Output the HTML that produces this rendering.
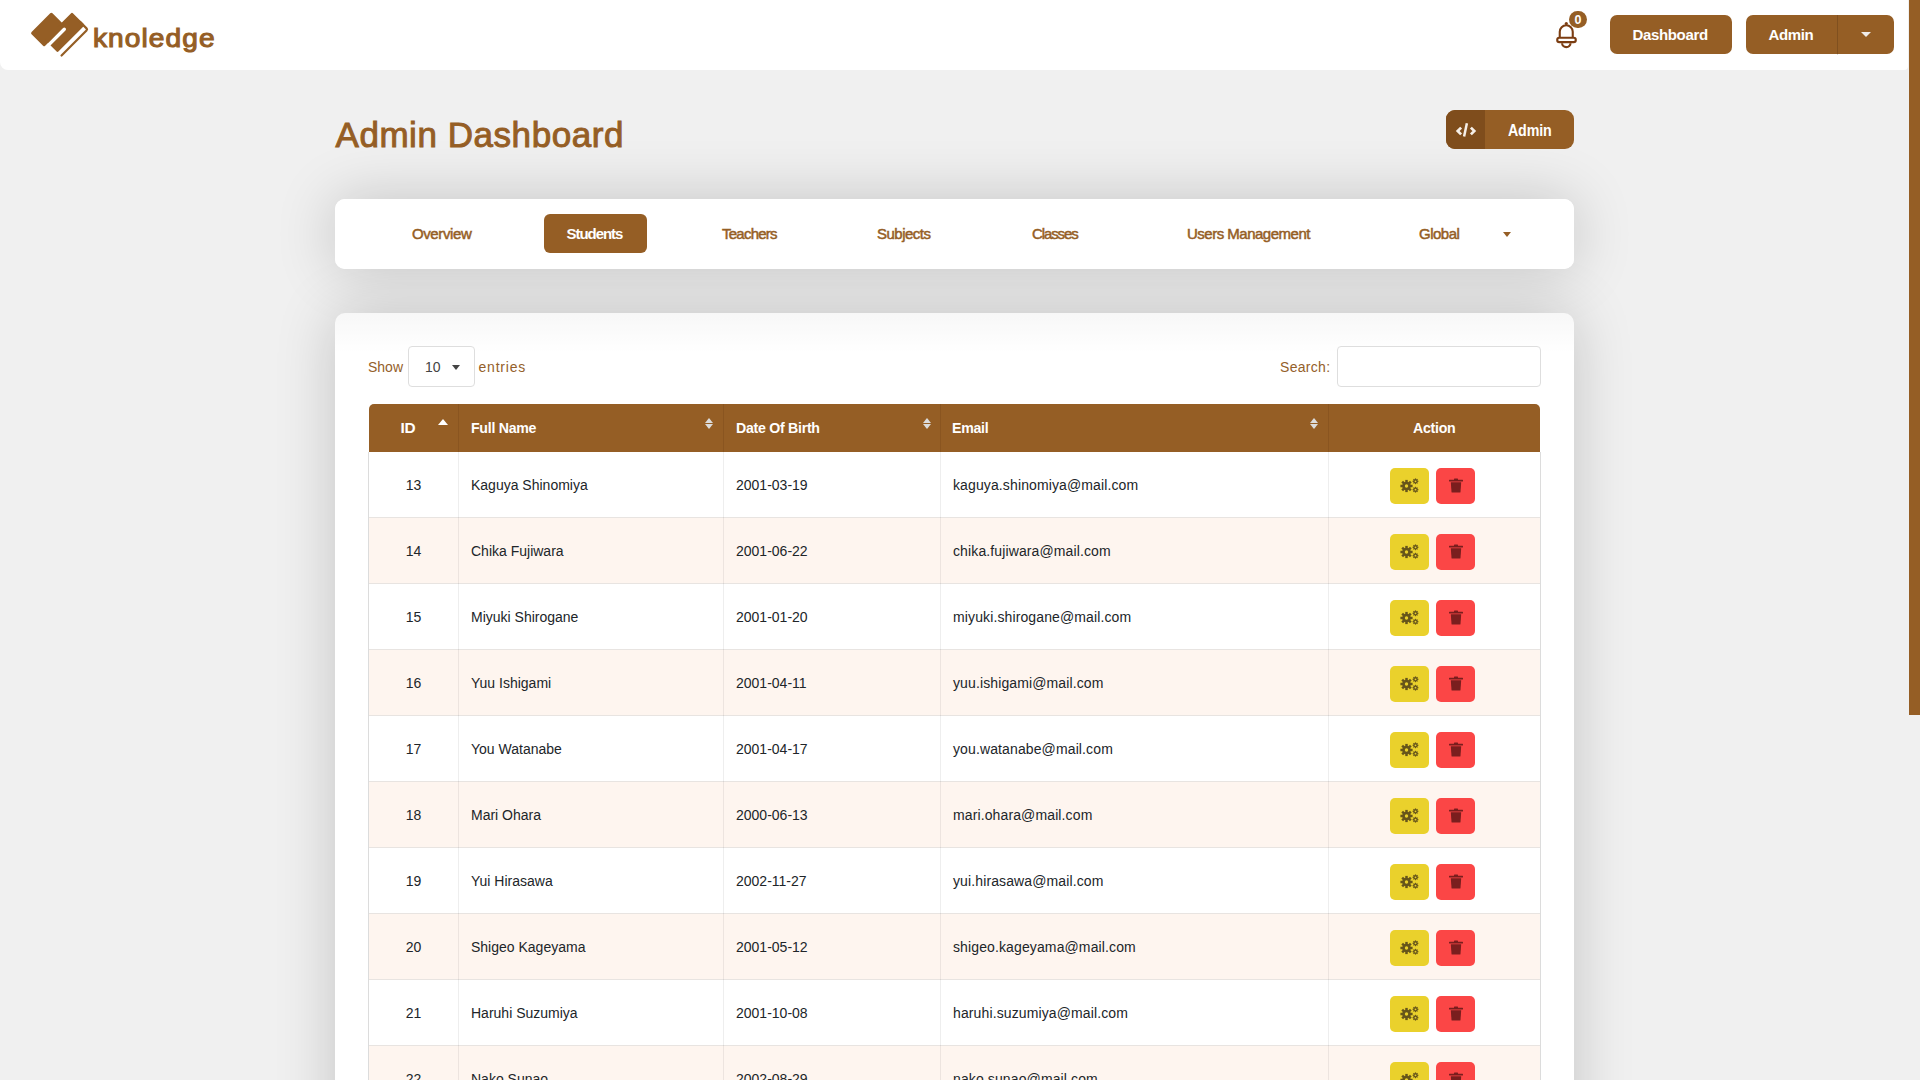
<!DOCTYPE html>
<html><head><meta charset="utf-8"><title>Admin Dashboard</title>
<style>
*{box-sizing:border-box;margin:0;padding:0}
html,body{width:1920px;height:1080px;overflow:hidden;background:#f0f0f0;font-family:"Liberation Sans",sans-serif}
.a{position:absolute}
.t{position:absolute;white-space:nowrap;line-height:1}
</style></head><body>
<div class="a" style="left:335px;top:199px;width:1239px;height:70px;background:#fff;border-radius:10px;box-shadow:0 0 60px rgba(0,0,0,.19)"></div>
<div class="a" style="left:335px;top:313px;width:1239px;height:900px;background:#fff;border-radius:10px;box-shadow:0 0 60px rgba(0,0,0,.19)"></div>
<div class="a" style="left:335px;top:199px;width:1239px;height:70px;background:#fff;border-radius:10px"></div>
<div class="a" style="left:335px;top:313px;width:1239px;height:40px;background:linear-gradient(rgba(0,0,0,.03),rgba(0,0,0,0));border-radius:10px 10px 0 0"></div>
<div class="a" style="left:0;top:0;width:1908px;height:70px;background:#fff;border-radius:0 0 4px 8px"></div>
<div class="a" style="left:1909px;top:0;width:11px;height:715px;background:#955e25"></div>
<svg class="a" style="left:0;top:0" width="100" height="70" viewBox="0 0 100 70">
<g transform="rotate(45)">
<rect x="44.9" y="-27.72" width="19.45" height="29.56" rx="1.6" fill="#955e25"/>
<rect x="59.61" y="-42.21" width="18.17" height="38.67" rx="1.6" fill="#955e25"/>
<rect x="64.49" y="-26.45" width="3.39" height="30" rx="1.7" fill="#fff"/>
<path d="M 72,-41.11 L 81.23,-41.11 A 1.5 1.5 0 0 1 82.73,-39.61 L 82.73,-4.3" fill="none" stroke="#955e25" stroke-width="2.2" stroke-linecap="round"/>
</g>
</svg>
<div class="t" style="left:93px;top:24.59px;font-size:26px;font-weight:400;color:#955e25;letter-spacing:1px;-webkit-text-stroke:1.1px #955e25;transform:scaleX(1.08);transform-origin:0 0">knoledge</div>
<svg class="a" style="left:1550px;top:15px" width="34" height="36" viewBox="0 0 34 36">
<g fill="none" stroke="#7b3d12" stroke-width="2.1">
<path d="M 9.75,22 L 9.75,16.8 A 6.5 6.5 0 0 1 22.75,16.8 L 22.75,22"/>
<rect x="7.2" y="22.8" width="18.6" height="4.3" rx="2.2"/>
<path d="M 12.1,28.3 A 4.2 3.8 0 0 0 20.5,28.3"/>
</g>
<circle cx="16.3" cy="8.5" r="1.6" fill="#7b3d12"/>
</svg>
<div class="a" style="left:1569px;top:11px;width:18px;height:17px;border-radius:9px;background:#955e25"></div>
<div class="t" style="left:1569.0px;width:18px;text-align:center;top:14.42px;font-size:12.5px;font-weight:700;color:#fff;">0</div>
<div class="a" style="left:1610px;top:15px;width:122px;height:39px;background:#955e25;border-radius:7px"></div>
<div class="t" style="left:1632.5px;top:27.30px;font-size:15px;font-weight:700;color:#fff;letter-spacing:-.35px">Dashboard</div>
<div class="a" style="left:1746px;top:15px;width:148px;height:39px;background:#955e25;border-radius:7px"></div>
<div class="a" style="left:1837px;top:15px;width:1px;height:40px;background:rgba(0,0,0,.14)"></div>
<div class="t" style="left:1768.5px;top:27.30px;font-size:15px;font-weight:700;color:#fff;letter-spacing:-.35px">Admin</div>
<div class="a" style="left:1861px;top:32px;width:0;height:0;border-left:5px solid transparent;border-right:5px solid transparent;border-top:5px solid #f0ece8"></div>
<div class="t" style="left:335.5px;top:117.17px;font-size:35px;font-weight:400;color:#955e25;letter-spacing:.55px;-webkit-text-stroke:.95px #955e25">Admin Dashboard</div>
<div class="a" style="left:1446px;top:110px;width:128px;height:39px;background:#955e25;border-radius:9px;overflow:hidden"><div class="a" style="left:0;top:0;width:39px;height:39px;background:#7f4d1c"></div></div>
<svg class="a" style="left:1455px;top:121px" width="22" height="18" viewBox="0 0 22 18">
<path d="M 6.1,6.6 L 2.7,10 L 6.1,13.4 M 15.9,6.6 L 19.3,10 L 15.9,13.4" fill="none" stroke="#f6efe8" stroke-width="2.7" stroke-linecap="butt" stroke-linejoin="miter"/>
<path d="M 11.9,2.2 L 9.1,15.6" stroke="#f6efe8" stroke-width="2.5"/>
</svg>
<div class="t" style="left:1508px;top:121.79px;font-size:16.2px;font-weight:700;color:#fff;letter-spacing:-.2px;transform:scaleX(.88);transform-origin:0 0">Admin</div>
<div class="a" style="left:544px;top:214px;width:103px;height:39px;background:#955e25;border-radius:6px"></div>
<div class="t" style="left:412px;top:226.30px;font-size:15px;font-weight:400;color:#955e25;letter-spacing:-0.4px;-webkit-text-stroke:.5px #955e25">Overview</div>
<div class="t" style="left:566.5px;top:226.30px;font-size:15px;font-weight:700;color:#fff;letter-spacing:-1.05px">Students</div>
<div class="t" style="left:722px;top:226.30px;font-size:15px;font-weight:400;color:#955e25;letter-spacing:-0.75px;-webkit-text-stroke:.5px #955e25">Teachers</div>
<div class="t" style="left:877px;top:226.30px;font-size:15px;font-weight:400;color:#955e25;letter-spacing:-0.5px;-webkit-text-stroke:.5px #955e25">Subjects</div>
<div class="t" style="left:1032px;top:226.30px;font-size:15px;font-weight:400;color:#955e25;letter-spacing:-1.1px;-webkit-text-stroke:.5px #955e25">Classes</div>
<div class="t" style="left:1187px;top:226.30px;font-size:15px;font-weight:400;color:#955e25;letter-spacing:-0.5px;-webkit-text-stroke:.5px #955e25">Users Management</div>
<div class="t" style="left:1419px;top:226.30px;font-size:15px;font-weight:400;color:#955e25;letter-spacing:-0.5px;-webkit-text-stroke:.5px #955e25">Global</div>
<div class="a" style="left:1503px;top:232px;width:0;height:0;border-left:4px solid transparent;border-right:4px solid transparent;border-top:5px solid #955e25"></div>
<div class="t" style="left:368px;top:360.15px;font-size:14px;font-weight:400;color:#94602a;">Show</div>
<div class="a" style="left:408px;top:346px;width:67px;height:41px;border:1px solid #dedede;border-radius:4px;background:#fff"></div>
<div class="t" style="left:425px;top:360.15px;font-size:14px;font-weight:400;color:#444;">10</div>
<div class="a" style="left:452px;top:365px;width:0;height:0;border-left:4px solid transparent;border-right:4px solid transparent;border-top:5px solid #444"></div>
<div class="t" style="left:478.5px;top:360.15px;font-size:14px;font-weight:400;color:#94602a;letter-spacing:.8px">entries</div>
<div class="t" style="left:1280px;top:360.15px;font-size:14px;font-weight:400;color:#94602a;letter-spacing:.3px">Search:</div>
<div class="a" style="left:1337px;top:346px;width:204px;height:41px;border:1px solid #dedede;border-radius:4px;background:#fff"></div>
<div class="a" style="left:369px;top:404px;width:1171px;height:48px;background:#955e25;border-radius:5px 5px 0 0"></div>
<div class="a" style="left:458px;top:404px;width:1px;height:48px;background:#8a5520"></div>
<div class="a" style="left:723px;top:404px;width:1px;height:48px;background:#8a5520"></div>
<div class="a" style="left:940px;top:404px;width:1px;height:48px;background:#8a5520"></div>
<div class="a" style="left:1328px;top:404px;width:1px;height:48px;background:#8a5520"></div>
<div class="t" style="left:400.5px;top:420.16px;font-size:15.4px;font-weight:700;color:#fff;letter-spacing:-.4px">ID</div>
<div class="t" style="left:470.5px;top:420.16px;font-size:15.4px;font-weight:700;color:#fff;letter-spacing:-.3px;transform:scaleX(.92);transform-origin:0 0">Full Name</div>
<div class="t" style="left:735.5px;top:420.16px;font-size:15.4px;font-weight:700;color:#fff;letter-spacing:-.3px;transform:scaleX(.92);transform-origin:0 0">Date Of Birth</div>
<div class="t" style="left:952px;top:420.16px;font-size:15.4px;font-weight:700;color:#fff;letter-spacing:-.3px;transform:scaleX(.92);transform-origin:0 0">Email</div>
<div class="t" style="left:1412.5px;top:420.16px;font-size:15.4px;font-weight:700;color:#fff;letter-spacing:-.3px;transform:scaleX(.92);transform-origin:0 0">Action</div>
<div class="a" style="left:438px;top:419px;width:0;height:0;border-left:5.5px solid transparent;border-right:5.5px solid transparent;border-bottom:6px solid #fff"></div>
<div class="a" style="left:705px;top:418px;width:0;height:0;border-left:4.5px solid transparent;border-right:4.5px solid transparent;border-bottom:5px solid #dcdcdc"></div>
<div class="a" style="left:705px;top:424px;width:0;height:0;border-left:4.5px solid transparent;border-right:4.5px solid transparent;border-top:5px solid #dcdcdc"></div>
<div class="a" style="left:922.5px;top:418px;width:0;height:0;border-left:4.5px solid transparent;border-right:4.5px solid transparent;border-bottom:5px solid #dcdcdc"></div>
<div class="a" style="left:922.5px;top:424px;width:0;height:0;border-left:4.5px solid transparent;border-right:4.5px solid transparent;border-top:5px solid #dcdcdc"></div>
<div class="a" style="left:1310px;top:418px;width:0;height:0;border-left:4.5px solid transparent;border-right:4.5px solid transparent;border-bottom:5px solid #dcdcdc"></div>
<div class="a" style="left:1310px;top:424px;width:0;height:0;border-left:4.5px solid transparent;border-right:4.5px solid transparent;border-top:5px solid #dcdcdc"></div>
<div class="a" style="left:369px;top:452px;width:1171px;height:66px;background:#fff"></div>
<div class="a" style="left:369px;top:517px;width:1171px;height:1px;background:#e8e4e1"></div>
<div class="t" style="left:373.5px;width:80px;text-align:center;top:477.95px;font-size:14px;font-weight:400;color:#212529;">13</div>
<div class="t" style="left:471px;top:477.95px;font-size:14px;font-weight:400;color:#212529;">Kaguya Shinomiya</div>
<div class="t" style="left:736px;top:477.95px;font-size:14px;font-weight:400;color:#212529;">2001-03-19</div>
<div class="t" style="left:953px;top:477.95px;font-size:14px;font-weight:400;color:#212529;letter-spacing:.12px">kaguya.shinomiya@mail.com</div>
<div class="a" style="left:1390px;top:468px;width:39px;height:36px;background:#ead12c;border-radius:5px"></div>
<div class="a" style="left:1436px;top:468px;width:39px;height:36px;background:#fb4646;border-radius:5px"></div>
<svg class="a" style="left:1399px;top:477px" width="22" height="18" viewBox="0 0 22 18">
<g fill="#66551b" stroke="#66551b">
<circle cx="7.5" cy="9" r="4.3" stroke="none"/>
<g stroke-width="2.5"><line x1="7.5" y1="2.9" x2="7.5" y2="15.1"/><line x1="1.4" y1="9" x2="13.6" y2="9"/><line x1="3.2" y1="4.7" x2="11.8" y2="13.3"/><line x1="3.2" y1="13.3" x2="11.8" y2="4.7"/></g>
<circle cx="16.5" cy="4.3" r="2.1" stroke="none"/><circle cx="16.5" cy="12.7" r="2.1" stroke="none"/>
<g stroke-width="1.2"><line x1="16.5" y1="1.4" x2="16.5" y2="7.2"/><line x1="13.6" y1="4.3" x2="19.4" y2="4.3"/><line x1="14.45" y1="2.25" x2="18.55" y2="6.35"/><line x1="14.45" y1="6.35" x2="18.55" y2="2.25"/>
<line x1="16.5" y1="9.8" x2="16.5" y2="15.6"/><line x1="13.6" y1="12.7" x2="19.4" y2="12.7"/><line x1="14.45" y1="10.65" x2="18.55" y2="14.75"/><line x1="14.45" y1="14.75" x2="18.55" y2="10.65"/></g>
</g><circle cx="7.5" cy="9" r="1.7" fill="#ead12c"/><circle cx="16.5" cy="4.3" r="0.9" fill="#ead12c"/><circle cx="16.5" cy="12.7" r="0.9" fill="#ead12c"/>
</svg>
<svg class="a" style="left:1448px;top:477.5px" width="16" height="16" viewBox="0 0 16 16">
<g fill="#7a1e1e"><rect x="1" y="1.8" width="14" height="1.6" rx=".5"/><rect x="6" y="0.6" width="4" height="1.6" rx=".5"/><path d="M 2.8,4.3 L 13.2,4.3 L 12.5,14 Q 12.4,14.6 11.8,14.6 L 4.2,14.6 Q 3.6,14.6 3.5,14 Z"/></g>
</svg>
<div class="a" style="left:369px;top:518px;width:1171px;height:66px;background:#fef5ef"></div>
<div class="a" style="left:369px;top:583px;width:1171px;height:1px;background:#e8e4e1"></div>
<div class="t" style="left:373.5px;width:80px;text-align:center;top:543.95px;font-size:14px;font-weight:400;color:#212529;">14</div>
<div class="t" style="left:471px;top:543.95px;font-size:14px;font-weight:400;color:#212529;">Chika Fujiwara</div>
<div class="t" style="left:736px;top:543.95px;font-size:14px;font-weight:400;color:#212529;">2001-06-22</div>
<div class="t" style="left:953px;top:543.95px;font-size:14px;font-weight:400;color:#212529;letter-spacing:.12px">chika.fujiwara@mail.com</div>
<div class="a" style="left:1390px;top:534px;width:39px;height:36px;background:#ead12c;border-radius:5px"></div>
<div class="a" style="left:1436px;top:534px;width:39px;height:36px;background:#fb4646;border-radius:5px"></div>
<svg class="a" style="left:1399px;top:543px" width="22" height="18" viewBox="0 0 22 18">
<g fill="#66551b" stroke="#66551b">
<circle cx="7.5" cy="9" r="4.3" stroke="none"/>
<g stroke-width="2.5"><line x1="7.5" y1="2.9" x2="7.5" y2="15.1"/><line x1="1.4" y1="9" x2="13.6" y2="9"/><line x1="3.2" y1="4.7" x2="11.8" y2="13.3"/><line x1="3.2" y1="13.3" x2="11.8" y2="4.7"/></g>
<circle cx="16.5" cy="4.3" r="2.1" stroke="none"/><circle cx="16.5" cy="12.7" r="2.1" stroke="none"/>
<g stroke-width="1.2"><line x1="16.5" y1="1.4" x2="16.5" y2="7.2"/><line x1="13.6" y1="4.3" x2="19.4" y2="4.3"/><line x1="14.45" y1="2.25" x2="18.55" y2="6.35"/><line x1="14.45" y1="6.35" x2="18.55" y2="2.25"/>
<line x1="16.5" y1="9.8" x2="16.5" y2="15.6"/><line x1="13.6" y1="12.7" x2="19.4" y2="12.7"/><line x1="14.45" y1="10.65" x2="18.55" y2="14.75"/><line x1="14.45" y1="14.75" x2="18.55" y2="10.65"/></g>
</g><circle cx="7.5" cy="9" r="1.7" fill="#ead12c"/><circle cx="16.5" cy="4.3" r="0.9" fill="#ead12c"/><circle cx="16.5" cy="12.7" r="0.9" fill="#ead12c"/>
</svg>
<svg class="a" style="left:1448px;top:543.5px" width="16" height="16" viewBox="0 0 16 16">
<g fill="#7a1e1e"><rect x="1" y="1.8" width="14" height="1.6" rx=".5"/><rect x="6" y="0.6" width="4" height="1.6" rx=".5"/><path d="M 2.8,4.3 L 13.2,4.3 L 12.5,14 Q 12.4,14.6 11.8,14.6 L 4.2,14.6 Q 3.6,14.6 3.5,14 Z"/></g>
</svg>
<div class="a" style="left:369px;top:584px;width:1171px;height:66px;background:#fff"></div>
<div class="a" style="left:369px;top:649px;width:1171px;height:1px;background:#e8e4e1"></div>
<div class="t" style="left:373.5px;width:80px;text-align:center;top:609.95px;font-size:14px;font-weight:400;color:#212529;">15</div>
<div class="t" style="left:471px;top:609.95px;font-size:14px;font-weight:400;color:#212529;">Miyuki Shirogane</div>
<div class="t" style="left:736px;top:609.95px;font-size:14px;font-weight:400;color:#212529;">2001-01-20</div>
<div class="t" style="left:953px;top:609.95px;font-size:14px;font-weight:400;color:#212529;letter-spacing:.12px">miyuki.shirogane@mail.com</div>
<div class="a" style="left:1390px;top:600px;width:39px;height:36px;background:#ead12c;border-radius:5px"></div>
<div class="a" style="left:1436px;top:600px;width:39px;height:36px;background:#fb4646;border-radius:5px"></div>
<svg class="a" style="left:1399px;top:609px" width="22" height="18" viewBox="0 0 22 18">
<g fill="#66551b" stroke="#66551b">
<circle cx="7.5" cy="9" r="4.3" stroke="none"/>
<g stroke-width="2.5"><line x1="7.5" y1="2.9" x2="7.5" y2="15.1"/><line x1="1.4" y1="9" x2="13.6" y2="9"/><line x1="3.2" y1="4.7" x2="11.8" y2="13.3"/><line x1="3.2" y1="13.3" x2="11.8" y2="4.7"/></g>
<circle cx="16.5" cy="4.3" r="2.1" stroke="none"/><circle cx="16.5" cy="12.7" r="2.1" stroke="none"/>
<g stroke-width="1.2"><line x1="16.5" y1="1.4" x2="16.5" y2="7.2"/><line x1="13.6" y1="4.3" x2="19.4" y2="4.3"/><line x1="14.45" y1="2.25" x2="18.55" y2="6.35"/><line x1="14.45" y1="6.35" x2="18.55" y2="2.25"/>
<line x1="16.5" y1="9.8" x2="16.5" y2="15.6"/><line x1="13.6" y1="12.7" x2="19.4" y2="12.7"/><line x1="14.45" y1="10.65" x2="18.55" y2="14.75"/><line x1="14.45" y1="14.75" x2="18.55" y2="10.65"/></g>
</g><circle cx="7.5" cy="9" r="1.7" fill="#ead12c"/><circle cx="16.5" cy="4.3" r="0.9" fill="#ead12c"/><circle cx="16.5" cy="12.7" r="0.9" fill="#ead12c"/>
</svg>
<svg class="a" style="left:1448px;top:609.5px" width="16" height="16" viewBox="0 0 16 16">
<g fill="#7a1e1e"><rect x="1" y="1.8" width="14" height="1.6" rx=".5"/><rect x="6" y="0.6" width="4" height="1.6" rx=".5"/><path d="M 2.8,4.3 L 13.2,4.3 L 12.5,14 Q 12.4,14.6 11.8,14.6 L 4.2,14.6 Q 3.6,14.6 3.5,14 Z"/></g>
</svg>
<div class="a" style="left:369px;top:650px;width:1171px;height:66px;background:#fef5ef"></div>
<div class="a" style="left:369px;top:715px;width:1171px;height:1px;background:#e8e4e1"></div>
<div class="t" style="left:373.5px;width:80px;text-align:center;top:675.95px;font-size:14px;font-weight:400;color:#212529;">16</div>
<div class="t" style="left:471px;top:675.95px;font-size:14px;font-weight:400;color:#212529;">Yuu Ishigami</div>
<div class="t" style="left:736px;top:675.95px;font-size:14px;font-weight:400;color:#212529;">2001-04-11</div>
<div class="t" style="left:953px;top:675.95px;font-size:14px;font-weight:400;color:#212529;letter-spacing:.12px">yuu.ishigami@mail.com</div>
<div class="a" style="left:1390px;top:666px;width:39px;height:36px;background:#ead12c;border-radius:5px"></div>
<div class="a" style="left:1436px;top:666px;width:39px;height:36px;background:#fb4646;border-radius:5px"></div>
<svg class="a" style="left:1399px;top:675px" width="22" height="18" viewBox="0 0 22 18">
<g fill="#66551b" stroke="#66551b">
<circle cx="7.5" cy="9" r="4.3" stroke="none"/>
<g stroke-width="2.5"><line x1="7.5" y1="2.9" x2="7.5" y2="15.1"/><line x1="1.4" y1="9" x2="13.6" y2="9"/><line x1="3.2" y1="4.7" x2="11.8" y2="13.3"/><line x1="3.2" y1="13.3" x2="11.8" y2="4.7"/></g>
<circle cx="16.5" cy="4.3" r="2.1" stroke="none"/><circle cx="16.5" cy="12.7" r="2.1" stroke="none"/>
<g stroke-width="1.2"><line x1="16.5" y1="1.4" x2="16.5" y2="7.2"/><line x1="13.6" y1="4.3" x2="19.4" y2="4.3"/><line x1="14.45" y1="2.25" x2="18.55" y2="6.35"/><line x1="14.45" y1="6.35" x2="18.55" y2="2.25"/>
<line x1="16.5" y1="9.8" x2="16.5" y2="15.6"/><line x1="13.6" y1="12.7" x2="19.4" y2="12.7"/><line x1="14.45" y1="10.65" x2="18.55" y2="14.75"/><line x1="14.45" y1="14.75" x2="18.55" y2="10.65"/></g>
</g><circle cx="7.5" cy="9" r="1.7" fill="#ead12c"/><circle cx="16.5" cy="4.3" r="0.9" fill="#ead12c"/><circle cx="16.5" cy="12.7" r="0.9" fill="#ead12c"/>
</svg>
<svg class="a" style="left:1448px;top:675.5px" width="16" height="16" viewBox="0 0 16 16">
<g fill="#7a1e1e"><rect x="1" y="1.8" width="14" height="1.6" rx=".5"/><rect x="6" y="0.6" width="4" height="1.6" rx=".5"/><path d="M 2.8,4.3 L 13.2,4.3 L 12.5,14 Q 12.4,14.6 11.8,14.6 L 4.2,14.6 Q 3.6,14.6 3.5,14 Z"/></g>
</svg>
<div class="a" style="left:369px;top:716px;width:1171px;height:66px;background:#fff"></div>
<div class="a" style="left:369px;top:781px;width:1171px;height:1px;background:#e8e4e1"></div>
<div class="t" style="left:373.5px;width:80px;text-align:center;top:741.95px;font-size:14px;font-weight:400;color:#212529;">17</div>
<div class="t" style="left:471px;top:741.95px;font-size:14px;font-weight:400;color:#212529;">You Watanabe</div>
<div class="t" style="left:736px;top:741.95px;font-size:14px;font-weight:400;color:#212529;">2001-04-17</div>
<div class="t" style="left:953px;top:741.95px;font-size:14px;font-weight:400;color:#212529;letter-spacing:.12px">you.watanabe@mail.com</div>
<div class="a" style="left:1390px;top:732px;width:39px;height:36px;background:#ead12c;border-radius:5px"></div>
<div class="a" style="left:1436px;top:732px;width:39px;height:36px;background:#fb4646;border-radius:5px"></div>
<svg class="a" style="left:1399px;top:741px" width="22" height="18" viewBox="0 0 22 18">
<g fill="#66551b" stroke="#66551b">
<circle cx="7.5" cy="9" r="4.3" stroke="none"/>
<g stroke-width="2.5"><line x1="7.5" y1="2.9" x2="7.5" y2="15.1"/><line x1="1.4" y1="9" x2="13.6" y2="9"/><line x1="3.2" y1="4.7" x2="11.8" y2="13.3"/><line x1="3.2" y1="13.3" x2="11.8" y2="4.7"/></g>
<circle cx="16.5" cy="4.3" r="2.1" stroke="none"/><circle cx="16.5" cy="12.7" r="2.1" stroke="none"/>
<g stroke-width="1.2"><line x1="16.5" y1="1.4" x2="16.5" y2="7.2"/><line x1="13.6" y1="4.3" x2="19.4" y2="4.3"/><line x1="14.45" y1="2.25" x2="18.55" y2="6.35"/><line x1="14.45" y1="6.35" x2="18.55" y2="2.25"/>
<line x1="16.5" y1="9.8" x2="16.5" y2="15.6"/><line x1="13.6" y1="12.7" x2="19.4" y2="12.7"/><line x1="14.45" y1="10.65" x2="18.55" y2="14.75"/><line x1="14.45" y1="14.75" x2="18.55" y2="10.65"/></g>
</g><circle cx="7.5" cy="9" r="1.7" fill="#ead12c"/><circle cx="16.5" cy="4.3" r="0.9" fill="#ead12c"/><circle cx="16.5" cy="12.7" r="0.9" fill="#ead12c"/>
</svg>
<svg class="a" style="left:1448px;top:741.5px" width="16" height="16" viewBox="0 0 16 16">
<g fill="#7a1e1e"><rect x="1" y="1.8" width="14" height="1.6" rx=".5"/><rect x="6" y="0.6" width="4" height="1.6" rx=".5"/><path d="M 2.8,4.3 L 13.2,4.3 L 12.5,14 Q 12.4,14.6 11.8,14.6 L 4.2,14.6 Q 3.6,14.6 3.5,14 Z"/></g>
</svg>
<div class="a" style="left:369px;top:782px;width:1171px;height:66px;background:#fef5ef"></div>
<div class="a" style="left:369px;top:847px;width:1171px;height:1px;background:#e8e4e1"></div>
<div class="t" style="left:373.5px;width:80px;text-align:center;top:807.95px;font-size:14px;font-weight:400;color:#212529;">18</div>
<div class="t" style="left:471px;top:807.95px;font-size:14px;font-weight:400;color:#212529;">Mari Ohara</div>
<div class="t" style="left:736px;top:807.95px;font-size:14px;font-weight:400;color:#212529;">2000-06-13</div>
<div class="t" style="left:953px;top:807.95px;font-size:14px;font-weight:400;color:#212529;letter-spacing:.12px">mari.ohara@mail.com</div>
<div class="a" style="left:1390px;top:798px;width:39px;height:36px;background:#ead12c;border-radius:5px"></div>
<div class="a" style="left:1436px;top:798px;width:39px;height:36px;background:#fb4646;border-radius:5px"></div>
<svg class="a" style="left:1399px;top:807px" width="22" height="18" viewBox="0 0 22 18">
<g fill="#66551b" stroke="#66551b">
<circle cx="7.5" cy="9" r="4.3" stroke="none"/>
<g stroke-width="2.5"><line x1="7.5" y1="2.9" x2="7.5" y2="15.1"/><line x1="1.4" y1="9" x2="13.6" y2="9"/><line x1="3.2" y1="4.7" x2="11.8" y2="13.3"/><line x1="3.2" y1="13.3" x2="11.8" y2="4.7"/></g>
<circle cx="16.5" cy="4.3" r="2.1" stroke="none"/><circle cx="16.5" cy="12.7" r="2.1" stroke="none"/>
<g stroke-width="1.2"><line x1="16.5" y1="1.4" x2="16.5" y2="7.2"/><line x1="13.6" y1="4.3" x2="19.4" y2="4.3"/><line x1="14.45" y1="2.25" x2="18.55" y2="6.35"/><line x1="14.45" y1="6.35" x2="18.55" y2="2.25"/>
<line x1="16.5" y1="9.8" x2="16.5" y2="15.6"/><line x1="13.6" y1="12.7" x2="19.4" y2="12.7"/><line x1="14.45" y1="10.65" x2="18.55" y2="14.75"/><line x1="14.45" y1="14.75" x2="18.55" y2="10.65"/></g>
</g><circle cx="7.5" cy="9" r="1.7" fill="#ead12c"/><circle cx="16.5" cy="4.3" r="0.9" fill="#ead12c"/><circle cx="16.5" cy="12.7" r="0.9" fill="#ead12c"/>
</svg>
<svg class="a" style="left:1448px;top:807.5px" width="16" height="16" viewBox="0 0 16 16">
<g fill="#7a1e1e"><rect x="1" y="1.8" width="14" height="1.6" rx=".5"/><rect x="6" y="0.6" width="4" height="1.6" rx=".5"/><path d="M 2.8,4.3 L 13.2,4.3 L 12.5,14 Q 12.4,14.6 11.8,14.6 L 4.2,14.6 Q 3.6,14.6 3.5,14 Z"/></g>
</svg>
<div class="a" style="left:369px;top:848px;width:1171px;height:66px;background:#fff"></div>
<div class="a" style="left:369px;top:913px;width:1171px;height:1px;background:#e8e4e1"></div>
<div class="t" style="left:373.5px;width:80px;text-align:center;top:873.95px;font-size:14px;font-weight:400;color:#212529;">19</div>
<div class="t" style="left:471px;top:873.95px;font-size:14px;font-weight:400;color:#212529;">Yui Hirasawa</div>
<div class="t" style="left:736px;top:873.95px;font-size:14px;font-weight:400;color:#212529;">2002-11-27</div>
<div class="t" style="left:953px;top:873.95px;font-size:14px;font-weight:400;color:#212529;letter-spacing:.12px">yui.hirasawa@mail.com</div>
<div class="a" style="left:1390px;top:864px;width:39px;height:36px;background:#ead12c;border-radius:5px"></div>
<div class="a" style="left:1436px;top:864px;width:39px;height:36px;background:#fb4646;border-radius:5px"></div>
<svg class="a" style="left:1399px;top:873px" width="22" height="18" viewBox="0 0 22 18">
<g fill="#66551b" stroke="#66551b">
<circle cx="7.5" cy="9" r="4.3" stroke="none"/>
<g stroke-width="2.5"><line x1="7.5" y1="2.9" x2="7.5" y2="15.1"/><line x1="1.4" y1="9" x2="13.6" y2="9"/><line x1="3.2" y1="4.7" x2="11.8" y2="13.3"/><line x1="3.2" y1="13.3" x2="11.8" y2="4.7"/></g>
<circle cx="16.5" cy="4.3" r="2.1" stroke="none"/><circle cx="16.5" cy="12.7" r="2.1" stroke="none"/>
<g stroke-width="1.2"><line x1="16.5" y1="1.4" x2="16.5" y2="7.2"/><line x1="13.6" y1="4.3" x2="19.4" y2="4.3"/><line x1="14.45" y1="2.25" x2="18.55" y2="6.35"/><line x1="14.45" y1="6.35" x2="18.55" y2="2.25"/>
<line x1="16.5" y1="9.8" x2="16.5" y2="15.6"/><line x1="13.6" y1="12.7" x2="19.4" y2="12.7"/><line x1="14.45" y1="10.65" x2="18.55" y2="14.75"/><line x1="14.45" y1="14.75" x2="18.55" y2="10.65"/></g>
</g><circle cx="7.5" cy="9" r="1.7" fill="#ead12c"/><circle cx="16.5" cy="4.3" r="0.9" fill="#ead12c"/><circle cx="16.5" cy="12.7" r="0.9" fill="#ead12c"/>
</svg>
<svg class="a" style="left:1448px;top:873.5px" width="16" height="16" viewBox="0 0 16 16">
<g fill="#7a1e1e"><rect x="1" y="1.8" width="14" height="1.6" rx=".5"/><rect x="6" y="0.6" width="4" height="1.6" rx=".5"/><path d="M 2.8,4.3 L 13.2,4.3 L 12.5,14 Q 12.4,14.6 11.8,14.6 L 4.2,14.6 Q 3.6,14.6 3.5,14 Z"/></g>
</svg>
<div class="a" style="left:369px;top:914px;width:1171px;height:66px;background:#fef5ef"></div>
<div class="a" style="left:369px;top:979px;width:1171px;height:1px;background:#e8e4e1"></div>
<div class="t" style="left:373.5px;width:80px;text-align:center;top:939.95px;font-size:14px;font-weight:400;color:#212529;">20</div>
<div class="t" style="left:471px;top:939.95px;font-size:14px;font-weight:400;color:#212529;">Shigeo Kageyama</div>
<div class="t" style="left:736px;top:939.95px;font-size:14px;font-weight:400;color:#212529;">2001-05-12</div>
<div class="t" style="left:953px;top:939.95px;font-size:14px;font-weight:400;color:#212529;letter-spacing:.12px">shigeo.kageyama@mail.com</div>
<div class="a" style="left:1390px;top:930px;width:39px;height:36px;background:#ead12c;border-radius:5px"></div>
<div class="a" style="left:1436px;top:930px;width:39px;height:36px;background:#fb4646;border-radius:5px"></div>
<svg class="a" style="left:1399px;top:939px" width="22" height="18" viewBox="0 0 22 18">
<g fill="#66551b" stroke="#66551b">
<circle cx="7.5" cy="9" r="4.3" stroke="none"/>
<g stroke-width="2.5"><line x1="7.5" y1="2.9" x2="7.5" y2="15.1"/><line x1="1.4" y1="9" x2="13.6" y2="9"/><line x1="3.2" y1="4.7" x2="11.8" y2="13.3"/><line x1="3.2" y1="13.3" x2="11.8" y2="4.7"/></g>
<circle cx="16.5" cy="4.3" r="2.1" stroke="none"/><circle cx="16.5" cy="12.7" r="2.1" stroke="none"/>
<g stroke-width="1.2"><line x1="16.5" y1="1.4" x2="16.5" y2="7.2"/><line x1="13.6" y1="4.3" x2="19.4" y2="4.3"/><line x1="14.45" y1="2.25" x2="18.55" y2="6.35"/><line x1="14.45" y1="6.35" x2="18.55" y2="2.25"/>
<line x1="16.5" y1="9.8" x2="16.5" y2="15.6"/><line x1="13.6" y1="12.7" x2="19.4" y2="12.7"/><line x1="14.45" y1="10.65" x2="18.55" y2="14.75"/><line x1="14.45" y1="14.75" x2="18.55" y2="10.65"/></g>
</g><circle cx="7.5" cy="9" r="1.7" fill="#ead12c"/><circle cx="16.5" cy="4.3" r="0.9" fill="#ead12c"/><circle cx="16.5" cy="12.7" r="0.9" fill="#ead12c"/>
</svg>
<svg class="a" style="left:1448px;top:939.5px" width="16" height="16" viewBox="0 0 16 16">
<g fill="#7a1e1e"><rect x="1" y="1.8" width="14" height="1.6" rx=".5"/><rect x="6" y="0.6" width="4" height="1.6" rx=".5"/><path d="M 2.8,4.3 L 13.2,4.3 L 12.5,14 Q 12.4,14.6 11.8,14.6 L 4.2,14.6 Q 3.6,14.6 3.5,14 Z"/></g>
</svg>
<div class="a" style="left:369px;top:980px;width:1171px;height:66px;background:#fff"></div>
<div class="a" style="left:369px;top:1045px;width:1171px;height:1px;background:#e8e4e1"></div>
<div class="t" style="left:373.5px;width:80px;text-align:center;top:1005.95px;font-size:14px;font-weight:400;color:#212529;">21</div>
<div class="t" style="left:471px;top:1005.95px;font-size:14px;font-weight:400;color:#212529;">Haruhi Suzumiya</div>
<div class="t" style="left:736px;top:1005.95px;font-size:14px;font-weight:400;color:#212529;">2001-10-08</div>
<div class="t" style="left:953px;top:1005.95px;font-size:14px;font-weight:400;color:#212529;letter-spacing:.12px">haruhi.suzumiya@mail.com</div>
<div class="a" style="left:1390px;top:996px;width:39px;height:36px;background:#ead12c;border-radius:5px"></div>
<div class="a" style="left:1436px;top:996px;width:39px;height:36px;background:#fb4646;border-radius:5px"></div>
<svg class="a" style="left:1399px;top:1005px" width="22" height="18" viewBox="0 0 22 18">
<g fill="#66551b" stroke="#66551b">
<circle cx="7.5" cy="9" r="4.3" stroke="none"/>
<g stroke-width="2.5"><line x1="7.5" y1="2.9" x2="7.5" y2="15.1"/><line x1="1.4" y1="9" x2="13.6" y2="9"/><line x1="3.2" y1="4.7" x2="11.8" y2="13.3"/><line x1="3.2" y1="13.3" x2="11.8" y2="4.7"/></g>
<circle cx="16.5" cy="4.3" r="2.1" stroke="none"/><circle cx="16.5" cy="12.7" r="2.1" stroke="none"/>
<g stroke-width="1.2"><line x1="16.5" y1="1.4" x2="16.5" y2="7.2"/><line x1="13.6" y1="4.3" x2="19.4" y2="4.3"/><line x1="14.45" y1="2.25" x2="18.55" y2="6.35"/><line x1="14.45" y1="6.35" x2="18.55" y2="2.25"/>
<line x1="16.5" y1="9.8" x2="16.5" y2="15.6"/><line x1="13.6" y1="12.7" x2="19.4" y2="12.7"/><line x1="14.45" y1="10.65" x2="18.55" y2="14.75"/><line x1="14.45" y1="14.75" x2="18.55" y2="10.65"/></g>
</g><circle cx="7.5" cy="9" r="1.7" fill="#ead12c"/><circle cx="16.5" cy="4.3" r="0.9" fill="#ead12c"/><circle cx="16.5" cy="12.7" r="0.9" fill="#ead12c"/>
</svg>
<svg class="a" style="left:1448px;top:1005.5px" width="16" height="16" viewBox="0 0 16 16">
<g fill="#7a1e1e"><rect x="1" y="1.8" width="14" height="1.6" rx=".5"/><rect x="6" y="0.6" width="4" height="1.6" rx=".5"/><path d="M 2.8,4.3 L 13.2,4.3 L 12.5,14 Q 12.4,14.6 11.8,14.6 L 4.2,14.6 Q 3.6,14.6 3.5,14 Z"/></g>
</svg>
<div class="a" style="left:369px;top:1046px;width:1171px;height:66px;background:#fef5ef"></div>
<div class="a" style="left:369px;top:1111px;width:1171px;height:1px;background:#e8e4e1"></div>
<div class="t" style="left:373.5px;width:80px;text-align:center;top:1071.95px;font-size:14px;font-weight:400;color:#212529;">22</div>
<div class="t" style="left:471px;top:1071.95px;font-size:14px;font-weight:400;color:#212529;">Nako Sunao</div>
<div class="t" style="left:736px;top:1071.95px;font-size:14px;font-weight:400;color:#212529;">2002-08-29</div>
<div class="t" style="left:953px;top:1071.95px;font-size:14px;font-weight:400;color:#212529;letter-spacing:.12px">nako.sunao@mail.com</div>
<div class="a" style="left:1390px;top:1062px;width:39px;height:36px;background:#ead12c;border-radius:5px"></div>
<div class="a" style="left:1436px;top:1062px;width:39px;height:36px;background:#fb4646;border-radius:5px"></div>
<svg class="a" style="left:1399px;top:1071px" width="22" height="18" viewBox="0 0 22 18">
<g fill="#66551b" stroke="#66551b">
<circle cx="7.5" cy="9" r="4.3" stroke="none"/>
<g stroke-width="2.5"><line x1="7.5" y1="2.9" x2="7.5" y2="15.1"/><line x1="1.4" y1="9" x2="13.6" y2="9"/><line x1="3.2" y1="4.7" x2="11.8" y2="13.3"/><line x1="3.2" y1="13.3" x2="11.8" y2="4.7"/></g>
<circle cx="16.5" cy="4.3" r="2.1" stroke="none"/><circle cx="16.5" cy="12.7" r="2.1" stroke="none"/>
<g stroke-width="1.2"><line x1="16.5" y1="1.4" x2="16.5" y2="7.2"/><line x1="13.6" y1="4.3" x2="19.4" y2="4.3"/><line x1="14.45" y1="2.25" x2="18.55" y2="6.35"/><line x1="14.45" y1="6.35" x2="18.55" y2="2.25"/>
<line x1="16.5" y1="9.8" x2="16.5" y2="15.6"/><line x1="13.6" y1="12.7" x2="19.4" y2="12.7"/><line x1="14.45" y1="10.65" x2="18.55" y2="14.75"/><line x1="14.45" y1="14.75" x2="18.55" y2="10.65"/></g>
</g><circle cx="7.5" cy="9" r="1.7" fill="#ead12c"/><circle cx="16.5" cy="4.3" r="0.9" fill="#ead12c"/><circle cx="16.5" cy="12.7" r="0.9" fill="#ead12c"/>
</svg>
<svg class="a" style="left:1448px;top:1071.5px" width="16" height="16" viewBox="0 0 16 16">
<g fill="#7a1e1e"><rect x="1" y="1.8" width="14" height="1.6" rx=".5"/><rect x="6" y="0.6" width="4" height="1.6" rx=".5"/><path d="M 2.8,4.3 L 13.2,4.3 L 12.5,14 Q 12.4,14.6 11.8,14.6 L 4.2,14.6 Q 3.6,14.6 3.5,14 Z"/></g>
</svg>
<div class="a" style="left:458px;top:452px;width:1px;height:628px;background:rgba(0,0,0,.065)"></div>
<div class="a" style="left:723px;top:452px;width:1px;height:628px;background:rgba(0,0,0,.065)"></div>
<div class="a" style="left:940px;top:452px;width:1px;height:628px;background:rgba(0,0,0,.065)"></div>
<div class="a" style="left:1328px;top:452px;width:1px;height:628px;background:rgba(0,0,0,.065)"></div>
<div class="a" style="left:368px;top:452px;width:1px;height:628px;background:#dcdcdc"></div>
<div class="a" style="left:1540px;top:452px;width:1px;height:628px;background:#dcdcdc"></div>
</body></html>
